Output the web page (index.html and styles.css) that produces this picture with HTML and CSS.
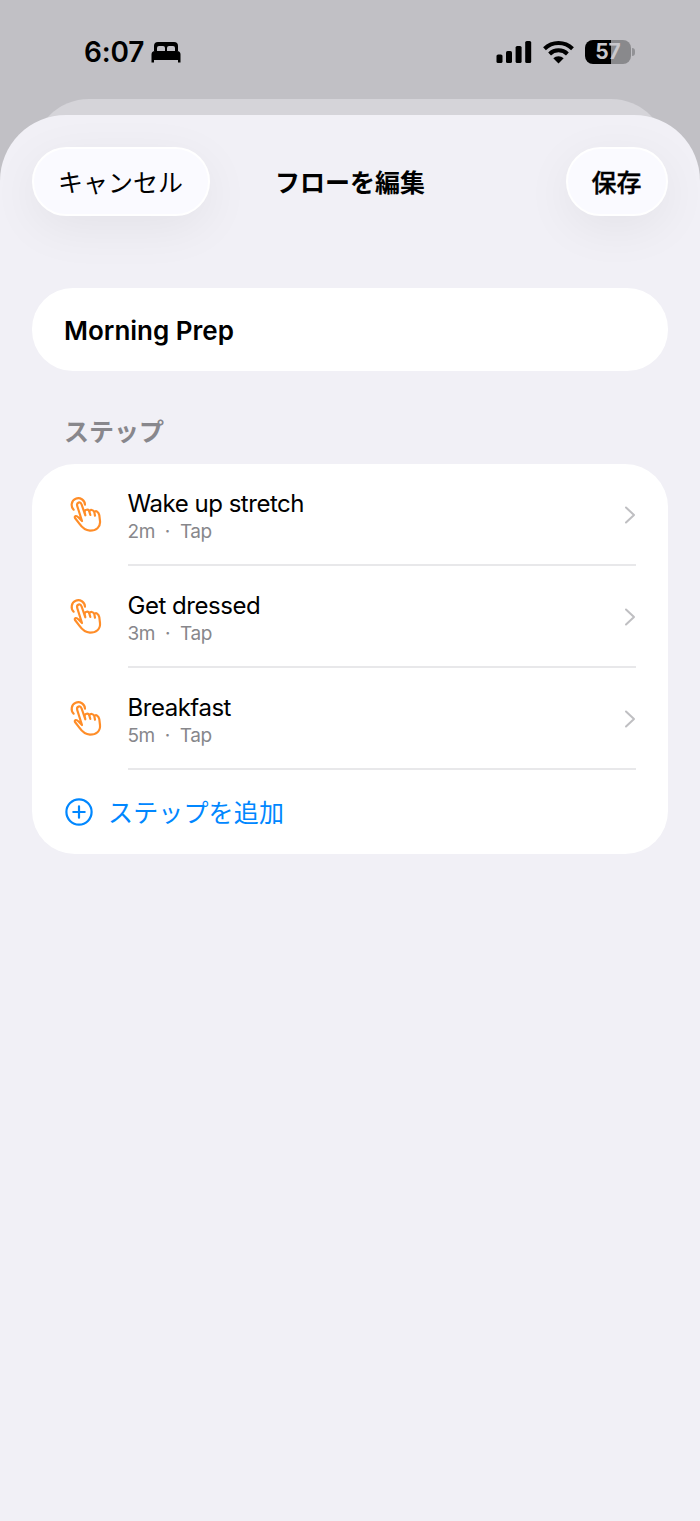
FILE: index.html
```html
<!DOCTYPE html>
<html lang="ja">
<head>
<meta charset="utf-8">
<title>フローを編集</title>
<link rel="stylesheet" href="styles.css">
</head>
<body>
<svg width="0" height="0" class="defs">
  <symbol id="tap" viewBox="0 0 180 180">
    <path d="M41 74A20 20 0 1 1 75 59M66 108L52 64C48 52 61 48 65 59L76 91L74 82C73 73 86 71 88 80L91 90M88 80C90 72 101 74 103 82L105 92M103 82C107 74 116 81 118 91L120 108C122 127 108 137 90 137C74 136 65 126 58 116L45 99C42 92 50 91 55 97L66 108"/>
  </symbol>
  <symbol id="chevron" viewBox="0 0 12 18"><path d="M2 1.5L10 9L2 16.5"/></symbol>
</svg>
<div class="screen">
  <header class="status">
    <div class="clock">
      <span class="time">6:07</span>
      <svg class="bed" viewBox="0 0 30 22"><path d="M3 9V4Q3 0 7 0H23Q27 0 27 4V9H24V6Q24 4 22 4H18Q16 4 16 6V9H14V6Q14 4 12 4H8Q6 4 6 6V9ZM4 9H26Q29.500 9 29.500 12.500V20.500H27V18H3V20.500H.5V12.500Q.5 9 4 9Z"/></svg>
    </div>
    <div class="indicators">
      <svg class="signal" viewBox="0 0 36 23"><rect x="0.500" y="13.500" width="6" height="8.500" rx="1.600"/><rect x="10" y="10" width="6" height="12" rx="1.600"/><rect x="19.600" y="5" width="6" height="17" rx="1.600"/><rect x="29.200" y="0" width="6" height="22" rx="1.600"/></svg>
      <svg class="wifi" viewBox="0 0 31 23"><path class="arc" d="M1.500 7.800A20 20 0 0 1 29.500 7.800M6.600 13A12.700 12.700 0 0 1 24.400 13"/><path d="M15.500 22.500L10.300 17.300A7.400 7.400 0 0 1 20.700 17.300Z"/></svg>
      <div class="battery"><span class="level">57</span><span class="nub"></span></div>
    </div>
  </header>
  <div class="underlay"></div>
  <main class="sheet">
    <nav class="bar">
      <button class="pill cancel">キャンセル</button>
      <h1 class="title">フローを編集</h1>
      <button class="pill save">保存</button>
    </nav>
    <section class="card name">Morning Prep</section>
    <h2 class="section">ステップ</h2>
    <section class="card steps">
      <div class="step"><svg class="tap"><use href="#tap"/></svg><div class="detail"><div><div class="label">Wake up stretch</div><div class="meta">2m<i>·</i>Tap</div></div><svg class="chevron"><use href="#chevron"/></svg></div></div>
      <div class="step"><svg class="tap"><use href="#tap"/></svg><div class="detail"><div><div class="label">Get dressed</div><div class="meta">3m<i>·</i>Tap</div></div><svg class="chevron"><use href="#chevron"/></svg></div></div>
      <div class="step"><svg class="tap"><use href="#tap"/></svg><div class="detail"><div><div class="label">Breakfast</div><div class="meta">5m<i>·</i>Tap</div></div><svg class="chevron"><use href="#chevron"/></svg></div></div>
      <div class="add"><svg class="plus" viewBox="0 0 28 28"><circle cx="14" cy="14" r="12.600"/><path d="M14 8.300V19.700M8.300 14H19.700"/></svg><span>ステップを追加</span></div>
    </section>
  </main>
</div>
</body>
</html>
```
FILE: styles.css
```css
* { box-sizing: border-box; }
body { margin: 0; background: #c1c0c5; font-family: Inter, "Noto Sans CJK JP", sans-serif; color: #000; }
.defs { display: block; }
.screen { height: 1521px; display: flex; flex-direction: column; overflow: hidden; }
.status { height: 99px; flex: none; display: flex; justify-content: space-between; padding: 36px 65px 0 84px; }
.clock, .indicators { display: flex; align-items: center; height: 32px; }
.time { font-size: 28px; font-weight: 600; letter-spacing: -.2px; width: 67px; white-space: nowrap; }
.bed { width: 30px; height: 22px; margin-top: 2px; }
.signal { width: 36px; height: 23px; margin-right: 11px; }
.wifi { width: 31px; height: 23px; margin-right: 11.500px; }
.arc { fill: none; stroke: #000; stroke-width: 4; }
.battery { display: flex; align-items: center; gap: 1px; margin-top: -1px; }
.level { width: 46px; height: 24px; border-radius: 8px; background: linear-gradient(90deg, #000 56%, #89898c 56%); color: #c9c8cd; font-size: 21px; line-height: 24px; font-weight: 700; text-align: center; }
.nub { width: 3px; height: 8px; border-radius: 0 3px 3px 0; background: #929296; }
.underlay { flex: none; height: 80px; margin: 0 33px -64px; border-radius: 56px 56px 0 0; background: #d5d4d9; }
.sheet { position: relative; flex: 1; padding: 32px 32px 0; border-radius: 66px 66px 0 0; background: #f1f0f6; }
.bar { display: grid; grid-template-columns: 178px 1fr 102px; height: 69px; align-items: center; }
.pill { height: 69px; padding: 0 1px 1px 0; border: 2px solid #fff; border-radius: 35px; background: #fafaff; box-shadow: 0 12px 50px rgba(0,0,0,.06); font: 400 25px "Noto Sans CJK JP", sans-serif; color: #000; }
.save { font-weight: 500; -webkit-text-stroke: .35px #000; }
.title { margin: 0 0 0 65px; padding-bottom: 1px; font: 700 25px/36px "Noto Sans CJK JP", sans-serif; white-space: nowrap; }
.card { background: #fff; border-radius: 41px; }
.name { height: 83px; margin-top: 72px; padding: 0 32px; font-size: 26px; font-weight: 600; line-height: 85px; letter-spacing: 0; }
.section { margin: 41px 0 0 32px; height: 51.600px; font: 700 25px/36px "Noto Sans CJK JP", sans-serif; color: #88878c; }
.steps { height: 390px; border-radius: 43px; }
.step { display: flex; height: 102.200px; padding: 0 32px 0 28px; }
.tap { width: 60px; height: 60px; margin-top: 21.500px; flex: none; fill: none; stroke: #ff8d28; stroke-width: 6.500; stroke-linecap: round; stroke-linejoin: round; }
.detail { flex: 1; display: flex; justify-content: space-between; margin-left: 7.500px; padding-top: 23px; border-bottom: 2px solid #e8e8ea; }
.label { font-size: 24px; line-height: 33px; letter-spacing: -.47px; white-space: nowrap; }
.meta { margin-top: -2px; font-size: 19px; line-height: 28px; color: #87878b; letter-spacing: -.45px; }
.meta i { font-style: normal; margin: 0 10px; }
.chevron { width: 12px; height: 18px; margin-top: 19px; fill: none; stroke: #bfbfc2; stroke-width: 2; stroke-linecap: round; stroke-linejoin: round; }
.add { height: 83px; display: flex; align-items: center; gap: 15px; padding: 0 0 0 33px; color: #0087ff; font: 400 25px "Noto Sans CJK JP", sans-serif; letter-spacing: .15px; }
.add span { padding-bottom: 1px; }
.plus { width: 28px; height: 28px; fill: none; stroke: #0087ff; stroke-width: 2.200; stroke-linecap: round; }
```
